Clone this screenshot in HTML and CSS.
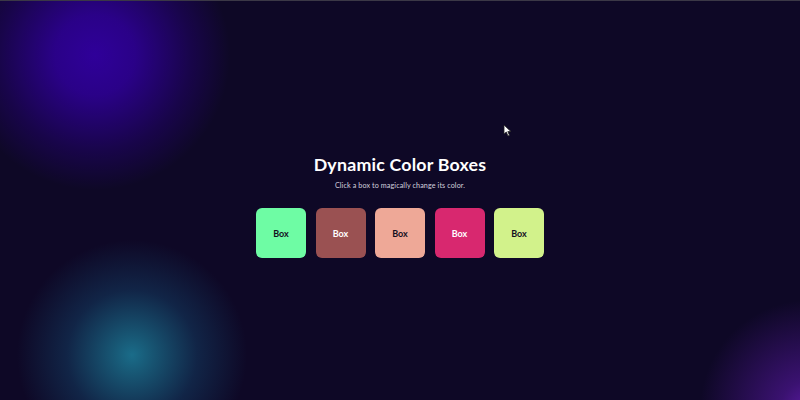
FILE: index.html
```html
<!DOCTYPE html>
<html>
<head>
<meta charset="utf-8">
<link rel="stylesheet" href="styles.css">
</head>
<body>
<main class="page">
  <h1 class="title">Dynamic Color Boxes</h1>
  <p class="subtitle">Click a box to magically change its color.</p>
  <div class="boxes">
    <div class="box dark-text" style="background:#6efca4">Box</div>
    <div class="box light-text" style="background:#9a5152">Box</div>
    <div class="box dark-text" style="background:#eea897">Box</div>
    <div class="box light-text" style="background:#d8286f">Box</div>
    <div class="box dark-text" style="background:#d2f28b">Box</div>
  </div>
</main>
<svg class="cursor" width="10" height="14" viewBox="0 0 10 14"><path d="M1 1 L1 10 L3.3 8 L5 12 L6.5 11.3 L4.8 7.6 L8 7.6 Z" fill="#fff" stroke="#222" stroke-width="0.8"/></svg>
</body>
</html>
```
FILE: styles.css
```css
html, body {
  margin: 0;
  padding: 0;
}
body {
  width: 800px;
  height: 400px;
  overflow: hidden;
  box-sizing: border-box;
  border-top: 1px solid #3b3846;
  position: relative;
  font-family: "Lato", "Open Sans", sans-serif;
  background:
    radial-gradient(circle at 95px 55px, #2f0099 0px, rgba(47,0,153,0.85) 40px, rgba(40,0,130,0.4) 95px, rgba(14,8,38,0) 135px),
    radial-gradient(circle at 132px 355px, #1a6c89 0px, rgba(26,108,137,0.8) 18px, rgba(22,80,120,0.4) 65px, rgba(14,8,38,0) 115px),
    radial-gradient(circle at 810px 410px, #5a1aa0 0px, rgba(77,22,144,0.7) 30px, rgba(14,8,38,0) 110px),
    #0e0826;
}
.page {
  padding-top: 151px;
  display: flex;
  flex-direction: column;
  align-items: center;
}
.title {
  margin: 0;
  color: #ffffff;
  font-size: 17.8px;
  font-weight: 700;
  line-height: 24px;
  letter-spacing: 0.2px;
}
.subtitle {
  margin: 4px 0 0;
  color: #d2d0de;
  font-size: 7.2px;
  line-height: 12px;
  letter-spacing: 0.1px;
}
.boxes {
  margin-top: 16px;
  display: flex;
  gap: 9.5px;
}
.box {
  width: 50px;
  height: 50px;
  border-radius: 6px;
  display: flex;
  align-items: center;
  justify-content: center;
  font-size: 9px;
  font-weight: 700;
}
.dark-text { color: #15101f; }
.light-text { color: #ffffff; }
.cursor {
  position: absolute;
  left: 503px;
  top: 123px;
}
```
